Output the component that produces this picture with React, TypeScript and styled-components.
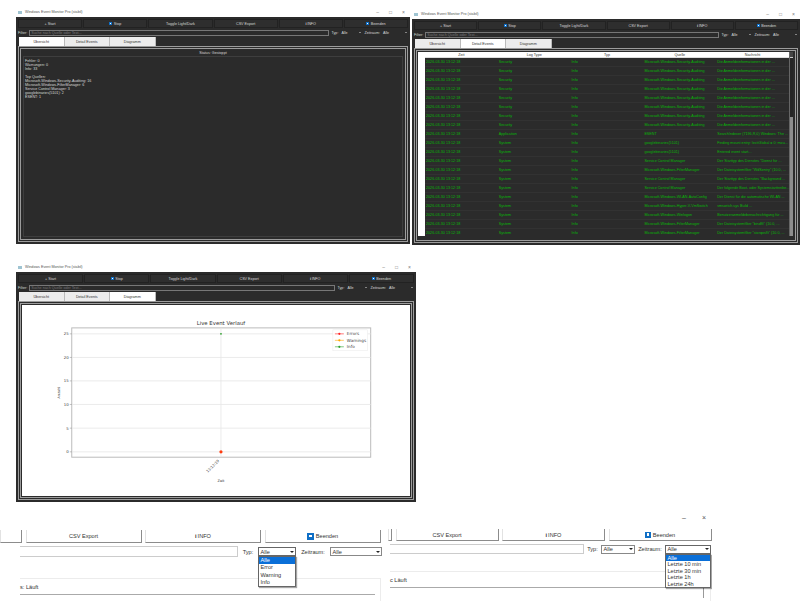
import React from "react";
import styled, { createGlobalStyle } from "styled-components";

const GlobalStyle = createGlobalStyle`
  html, body { margin: 0; padding: 0; background: #fff; }
  body { font-family: "Liberation Sans", Arial, sans-serif; }
`;

const Canvas = styled.div`
  position: relative;
  width: 812px;
  height: 601px;
  overflow: hidden;
  background: #fff;
`;

// each screenshot lies freely on the white sheet
const Shot = styled.div<{ $x: number; $y: number; $w: number; $h: number }>`
  position: absolute;
  left: ${(p) => p.$x}px;
  top: ${(p) => p.$y}px;
  width: ${(p) => p.$w}px;
  height: ${(p) => p.$h}px;
  display: flex;
  flex-direction: column;
  overflow: hidden;
`;

const TitleBar = styled.div`
  height: 10px;
  flex: none;
  display: flex;
  align-items: center;
  gap: 3px;
  padding: 0 2px;
  font-size: 3.7px;
  color: #555;
`;

const AppIcon = styled.span`
  width: 4px;
  height: 3px;
  background: #9fc4d2;
`;

const TitleText = styled.span`
  flex: 1;
`;

const Controls = styled.span`
  display: flex;
  gap: 10px;
  padding-right: 3px;
  font-size: 5px;
  color: #777;
`;

const Body = styled.div`
  flex: 1;
  min-height: 0;
  display: flex;
  flex-direction: column;
  background: #2b2b2b;
  padding: 2px;
  color: #d8d8d8;
  font-size: 3.7px;
`;

const Toolbar = styled.div`
  display: flex;
  gap: 1px;
  height: 9px;
  flex: none;
`;

const DarkButton = styled.div`
  flex: 1;
  display: flex;
  align-items: center;
  justify-content: center;
  gap: 1.5px;
  background: #2e2e2e;
  border: 1px solid #222;
  box-sizing: border-box;
`;

const BlueBox = styled.span<{ $size: number }>`
  display: flex;
  align-items: center;
  justify-content: center;
  width: ${(p) => p.$size}px;
  height: ${(p) => p.$size}px;
  background: #0f6fc6;

  &::after {
    content: "";
    width: ${(p) => p.$size * 0.4}px;
    height: ${(p) => p.$size * 0.4}px;
    background: #fff;
  }
`;

const InfoMark = styled.b`
  font-weight: 700;
  margin-right: -1px;
`;

const FilterRow = styled.div`
  display: flex;
  align-items: center;
  gap: 2px;
  height: 7px;
  margin-top: 1px;
  flex: none;
`;

const FilterInput = styled.div`
  flex: 1;
  height: 6px;
  box-sizing: border-box;
  border: 1px solid #777;
  color: #777;
  line-height: 4px;
  padding-left: 1px;
`;

const DarkSelect = styled.div<{ $w: number }>`
  width: ${(p) => p.$w}px;
  display: flex;
  justify-content: space-between;
  align-items: center;
  padding: 0 1px;
  box-sizing: border-box;
`;

const Arrow = styled.span<{ $size: number; $color: string }>`
  width: 0;
  height: 0;
  border-left: ${(p) => p.$size}px solid transparent;
  border-right: ${(p) => p.$size}px solid transparent;
  border-top: ${(p) => p.$size}px solid ${(p) => p.$color};
`;

const Tabs = styled.div`
  display: flex;
  height: 9px;
  margin: 1px 0 0 1px;
  flex: none;
`;

const Tab = styled.div<{ $active: boolean }>`
  width: 45.5px;
  display: flex;
  align-items: center;
  justify-content: center;
  box-sizing: border-box;
  background: ${(p) => (p.$active ? "#fff" : "#ececec")};
  border-right: 1px solid #bbb;
  color: #333;
`;

const Panel = styled.div`
  flex: 1;
  min-height: 0;
  display: flex;
  flex-direction: column;
  box-sizing: border-box;
  border: 3px double #9c9c9c;
`;

const StatusLabel = styled.div`
  height: 7px;
  flex: none;
  display: flex;
  align-items: center;
  justify-content: center;
`;

const SummaryBox = styled.div`
  flex: 1;
  margin: 0 2px 2px;
  padding: 2px 1px;
  border: 1px solid #3e3e3e;
  line-height: 4px;
`;

const SummaryLine = styled.div`
  min-height: 4px;
  white-space: pre;
`;

const TableWrap = styled.div`
  flex: 1;
  min-height: 0;
  display: flex;
  margin: 1px 2px 4px 1px;
`;

const RowHeader = styled.div`
  width: 7px;
  flex: none;
  background: #fff;
`;

const TableGrid = styled.div`
  flex: 1;
  min-width: 0;
  display: flex;
  flex-direction: column;
  overflow: hidden;
`;

const EventRow = styled.div<{ $head?: boolean }>`
  display: grid;
  grid-template-columns: repeat(5, 1fr);
  flex: none;
  height: ${(p) => (p.$head ? 6 : 9)}px;
  align-items: center;
  box-sizing: border-box;
  background: ${(p) => (p.$head ? "#fff" : "#2b2b2b")};
  color: ${(p) => (p.$head ? "#333" : "#07b907")};
  border-bottom: 1px solid ${(p) => (p.$head ? "#ddd" : "#323232")};
`;

const EventCell = styled.div<{ $head?: boolean }>`
  padding: 0 1px;
  white-space: nowrap;
  overflow: hidden;
  text-align: ${(p) => (p.$head ? "center" : "left")};
`;

const ScrollBar = styled.div`
  width: 4px;
  flex: none;
  display: flex;
  flex-direction: column;
  justify-content: space-between;
  background: #262626;
  border-left: 1px solid #666;
  box-sizing: border-box;
`;

const ScrollEnd = styled.div`
  height: 5px;
  flex: none;
  background: #444;
  border-bottom: 1px solid #ccc;
`;

const ScrollThumb = styled.div`
  height: 119px;
  flex: none;
  background: #8d8d8d;
`;

const ChartArea = styled.div`
  flex: 1;
  min-height: 0;
  margin: 1px;
  background: #fff;
  display: flex;
`;

const ChartSvg = styled.svg`
  width: 100%;
  height: 100%;
  font-family: "DejaVu Sans", sans-serif;
`;

// enlarged crops at the bottom
const CropTop = styled.div<{ $h: number }>`
  height: ${(p) => p.$h}px;
  flex: none;
  display: flex;
  justify-content: flex-end;
  align-items: flex-start;
  gap: 16px;
  padding-right: 6px;
  font-size: 7px;
  color: #555;
  line-height: 6px;
`;

const CropButtons = styled.div<{ $h: number }>`
  display: flex;
  gap: 3.5px;
  height: ${(p) => p.$h}px;
  flex: none;
`;

const LightButton = styled.div<{ $w: number }>`
  width: ${(p) => p.$w}px;
  flex: none;
  display: flex;
  align-items: center;
  justify-content: center;
  gap: 2px;
  box-sizing: border-box;
  background: #fff;
  border-left: 1px solid #e2e2e2;
  border-right: 1px solid #8c8c8c;
  border-bottom: 1px solid #8c8c8c;
  font-size: 5.6px;
  color: #333;
`;

const CropFilter = styled.div<{ $h: number }>`
  display: flex;
  align-items: center;
  height: ${(p) => p.$h}px;
  margin-top: 3px;
  flex: none;
  font-size: 5.6px;
  color: #333;
`;

const LightInput = styled.div<{ $left: number; $w: number }>`
  margin-left: ${(p) => p.$left}px;
  width: ${(p) => p.$w}px;
  height: 100%;
  flex: none;
  box-sizing: border-box;
  border: 1px solid #ccc;
  border-left: none;
`;

const CropLabel = styled.span<{ $w: number }>`
  width: ${(p) => p.$w}px;
  flex: none;
  text-align: center;
`;

const LightSelect = styled.div<{ $w: number; $open?: boolean }>`
  position: relative;
  width: ${(p) => p.$w}px;
  height: 9px;
  flex: none;
  display: flex;
  align-items: center;
  justify-content: space-between;
  box-sizing: border-box;
  padding: 0 1px 0 1.5px;
  background: #fff;
  border: 1px solid ${(p) => (p.$open ? "#666" : "#888")};
`;

const DropList = styled.div<{ $rowH: number }>`
  position: absolute;
  top: 8px;
  left: -1px;
  right: -1px;
  background: #fff;
  border: 1px solid #666;
  box-shadow: 1px 1px 1px rgba(0, 0, 0, 0.35);
  z-index: 2;
  line-height: ${(p) => p.$rowH}px;
`;

const DropItem = styled.div<{ $selected?: boolean }>`
  padding-left: 1.5px;
  white-space: nowrap;
  background: ${(p) => (p.$selected ? "#0a6fd8" : "transparent")};
  color: ${(p) => (p.$selected ? "#fff" : "#333")};
`;

const GroupBox = styled.div<{ $left: number; $w: number; $top: number }>`
  margin: ${(p) => p.$top}px 0 0 ${(p) => p.$left}px;
  width: ${(p) => p.$w}px;
  height: 30px;
  flex: none;
  box-sizing: border-box;
  border-top: 1px solid #ececec;
  border-right: 1px solid #ececec;
  font-size: 5.6px;
  color: #333;
`;

const GroupStatus = styled.div<{ $w: number }>`
  width: ${(p) => p.$w}px;
  height: 15px;
  line-height: 17px;
  border-bottom: 1px solid #aaa;
`;

const GroupStem = styled.div<{ $w: number }>`
  width: ${(p) => p.$w}px;
  height: 10px;
  box-sizing: border-box;
  border-right: 1px solid #999;
`;

const source = {
  audit: "Microsoft-Windows-Security-Auditing",
  filter: "Microsoft-Windows-FilterManager",
  scm: "Service Control Manager",
  google: "googlebinaries(5101)",
};

const login = "Die Anmeldeinformationen in der ...";

const events: [string, string, string][] = [
  ...Array.from({ length: 8 }, (): [string, string, string] => ["Security", source.audit, login]),
  ["Application", "ESENT", "SearchIndexer (7196,R,0) Windows: The ..."],
  ["System", source.google, "Finding mount entry: lecttGlobal = 0; mou..."],
  ["System", source.google, "Entered event start..."],
  ["System", source.scm, "Der Starttyp des Dienstes \"Dienst für ..."],
  ["System", source.filter, "Der Dateisystemfilter \"WdSentry\" (10.0, ..."],
  ["System", source.scm, "Der Starttyp des Dienstes \"Background ..."],
  ["System", source.scm, "Der folgende Boot- oder Systemstarttreibe..."],
  ["System", "Microsoft-Windows-WLAN-AutoConfig", "Der Dienst für die automatische WLAN ..."],
  ["System", "Microsoft-Windows-Hyper-V-VmSwitch", "vmswitch.sys Build ..."],
  ["System", "Microsoft-Windows-Winlogon", "Benutzeranmeldebenachrichtigung für ..."],
  ["System", source.filter, "Der Dateisystemfilter \"bindflt\" (10.0, ..."],
  ["System", source.filter, "Der Dateisystemfilter \"storqosflt\" (10.0, ..."],
];

const summary = [
  "Fehler: 0",
  "Warnungen: 0",
  "Info: 33",
  "",
  "Top Quellen:",
  "Microsoft-Windows-Security-Auditing: 16",
  "Microsoft-Windows-FilterManager: 6",
  "Service Control Manager: 3",
  "googlebinaries(5101): 2",
  "ESENT: 1",
];

const tabNames = ["Übersicht", "Detail Events", "Diagramm"];

type MonitorProps = {
  x: number;
  y: number;
  w: number;
  h: number;
  activeTab: number;
  children: React.ReactNode;
};

const Monitor = ({ x, y, w, h, activeTab, children }: MonitorProps) => (
  <Shot $x={x} $y={y} $w={w} $h={h}>
    <TitleBar>
      <AppIcon />
      <TitleText>Windows Event Monitor Pro (stabil)</TitleText>
      <Controls>
        <span>–</span>
        <span>□</span>
        <span>×</span>
      </Controls>
    </TitleBar>
    <Body>
      <Toolbar>
        <DarkButton>+ Start</DarkButton>
        <DarkButton>
          <BlueBox $size={3} /> Stop
        </DarkButton>
        <DarkButton>Toggle Light/Dark</DarkButton>
        <DarkButton>CSV Export</DarkButton>
        <DarkButton>
          <InfoMark>i</InfoMark> INFO
        </DarkButton>
        <DarkButton>
          <BlueBox $size={3} /> Beenden
        </DarkButton>
      </Toolbar>
      <FilterRow>
        <span>Filter:</span>
        <FilterInput>Suche nach Quelle oder Text...</FilterInput>
        <span>Typ:</span>
        <DarkSelect $w={22}>
          Alle <Arrow $size={1} $color="#ddd" />
        </DarkSelect>
        <span>Zeitraum:</span>
        <DarkSelect $w={26}>
          Alle <Arrow $size={1} $color="#ddd" />
        </DarkSelect>
      </FilterRow>
      <Tabs>
        {tabNames.map((name, i) => (
          <Tab key={name} $active={i === activeTab}>
            {name}
          </Tab>
        ))}
      </Tabs>
      <Panel>{children}</Panel>
    </Body>
  </Shot>
);

const EventTable = () => (
  <TableWrap>
    <RowHeader />
    <TableGrid>
      <EventRow $head>
        {["Zeit", "Log Type", "Typ", "Quelle", "Nachricht"].map((h) => (
          <EventCell key={h} $head>
            {h}
          </EventCell>
        ))}
      </EventRow>
      {events.map((e, i) => (
        <EventRow key={i}>
          <EventCell>2026-03-30 13:12:18</EventCell>
          <EventCell>{e[0]}</EventCell>
          <EventCell>Info</EventCell>
          <EventCell>{e[1]}</EventCell>
          <EventCell>{e[2]}</EventCell>
        </EventRow>
      ))}
    </TableGrid>
    <ScrollBar>
      <ScrollEnd />
      <ScrollThumb />
    </ScrollBar>
  </TableWrap>
);

const yTicks = [
  { label: "25", y: 333 },
  { label: "20", y: 356.7 },
  { label: "15", y: 380.3 },
  { label: "10", y: 404 },
  { label: "5", y: 427.8 },
  { label: "0", y: 451.6 },
];

const legend = [
  { label: "Errors", color: "#ff2020", y: 333 },
  { label: "Warnings", color: "#ffa500", y: 339.5 },
  { label: "Info", color: "#2ca02c", y: 346 },
];

const LiveChart = () => (
  <ChartArea>
    <ChartSvg viewBox="22 304 387 192">
      <text x="220.5" y="324" fontSize="5.4" textAnchor="middle" fill="#333">
        Live Event Verlauf
      </text>
      <rect x="70.5" y="327" width="300.5" height="130" fill="#fff" stroke="#bbb" strokeWidth="1" />
      <line x1="220.5" y1="327" x2="220.5" y2="457" stroke="#e6e6e6" strokeWidth="0.8" />
      {yTicks.map((t) => (
        <g key={t.label}>
          <line x1="70.5" y1={t.y} x2="371" y2={t.y} stroke="#e6e6e6" strokeWidth="0.8" />
          <line x1="68.5" y1={t.y} x2="70.5" y2={t.y} stroke="#666" strokeWidth="0.4" />
          <text x="67.5" y={t.y + 1.5} fontSize="3.9" textAnchor="end" fill="#444">
            {t.label}
          </text>
        </g>
      ))}
      <circle cx="220.5" cy="333" r="0.9" fill="#2ca02c" />
      <circle cx="220.5" cy="451.6" r="1.6" fill="#ff3c10" />
      <rect x="333" y="329" width="35" height="21" fill="#fff" stroke="#e8e8e8" strokeWidth="0.5" />
      {legend.map((l) => (
        <g key={l.label}>
          <line x1="335" y1={l.y} x2="344" y2={l.y} stroke={l.color} strokeWidth="0.6" />
          <circle cx="339.5" cy={l.y} r="1.1" fill={l.color} />
          <text x="347" y={l.y + 1.5} fontSize="4.2" fill="#444">
            {l.label}
          </text>
        </g>
      ))}
      <text
        x="219"
        y="461"
        fontSize="3.7"
        textAnchor="end"
        fill="#444"
        transform="rotate(-45 219 461)"
      >
        13:12:19
      </text>
      <text x="220.5" y="482" fontSize="3.5" textAnchor="middle" fill="#333">
        Zeit
      </text>
      <text
        x="59"
        y="392"
        fontSize="3.5"
        textAnchor="middle"
        fill="#333"
        transform="rotate(-90 59 392)"
      >
        Anzahl
      </text>
    </ChartSvg>
  </ChartArea>
);

export default function App() {
  return (
    <>
      <GlobalStyle />
      <Canvas>
        <Monitor x={16} y={7} w={394} h={237} activeTab={0}>
          <StatusLabel>Status: Gestoppt</StatusLabel>
          <SummaryBox>
            {summary.map((line, i) => (
              <SummaryLine key={i}>{line}</SummaryLine>
            ))}
          </SummaryBox>
        </Monitor>

        <Monitor x={412} y={9} w={388} h={236} activeTab={1}>
          <EventTable />
        </Monitor>

        <Monitor x={16} y={262} w={400} h={240} activeTab={2}>
          <LiveChart />
        </Monitor>

        <Shot $x={0} $y={525} $w={384} $h={76}>
          <CropTop $h={5} />
          <CropButtons $h={13}>
            <LightButton $w={22} />
            <LightButton $w={116}>CSV Export</LightButton>
            <LightButton $w={116}>
              <InfoMark>i</InfoMark> INFO
            </LightButton>
            <LightButton $w={116}>
              <BlueBox $size={7} /> Beenden
            </LightButton>
          </CropButtons>
          <CropFilter $h={11}>
            <LightInput $left={20} $w={218} />
            <CropLabel $w={20}>Typ:</CropLabel>
            <LightSelect $w={38} $open>
              Alle <Arrow $size={2} $color="#222" />
              <DropList $rowH={7.3}>
                <DropItem $selected>Alle</DropItem>
                <DropItem>Error</DropItem>
                <DropItem>Warning</DropItem>
                <DropItem>Info</DropItem>
              </DropList>
            </LightSelect>
            <CropLabel $w={34}>Zeitraum:</CropLabel>
            <LightSelect $w={52}>
              Alle <Arrow $size={2} $color="#222" />
            </LightSelect>
          </CropFilter>
          <GroupBox $left={20} $w={361} $top={21}>
            <GroupStatus $w={355}>s: Läuft</GroupStatus>
          </GroupBox>
        </Shot>

        <Shot $x={388} $y={515} $w={324} $h={86}>
          <CropTop $h={14}>
            <span>–</span>
            <span>×</span>
          </CropTop>
          <CropButtons $h={12}>
            <LightButton $w={4} />
            <LightButton $w={103}>CSV Export</LightButton>
            <LightButton $w={103}>
              <InfoMark>i</InfoMark> INFO
            </LightButton>
            <LightButton $w={103}>
              <BlueBox $size={6} /> Beenden
            </LightButton>
          </CropButtons>
          <CropFilter $h={10}>
            <LightInput $left={2} $w={194} />
            <CropLabel $w={17}>Typ:</CropLabel>
            <LightSelect $w={34}>
              Alle <Arrow $size={2} $color="#222" />
            </LightSelect>
            <CropLabel $w={30}>Zeitraum:</CropLabel>
            <LightSelect $w={46} $open>
              Alle <Arrow $size={2} $color="#222" />
              <DropList $rowH={6.5}>
                <DropItem $selected>Alle</DropItem>
                <DropItem>Letzte 10 min</DropItem>
                <DropItem>Letzte 30 min</DropItem>
                <DropItem>Letzte 1h</DropItem>
                <DropItem>Letzte 24h</DropItem>
              </DropList>
            </LightSelect>
          </CropFilter>
          <GroupBox $left={2} $w={321} $top={17}>
            <GroupStatus $w={314}>c Läuft</GroupStatus>
            <GroupStem $w={314} />
          </GroupBox>
        </Shot>
      </Canvas>
    </>
  );
}
